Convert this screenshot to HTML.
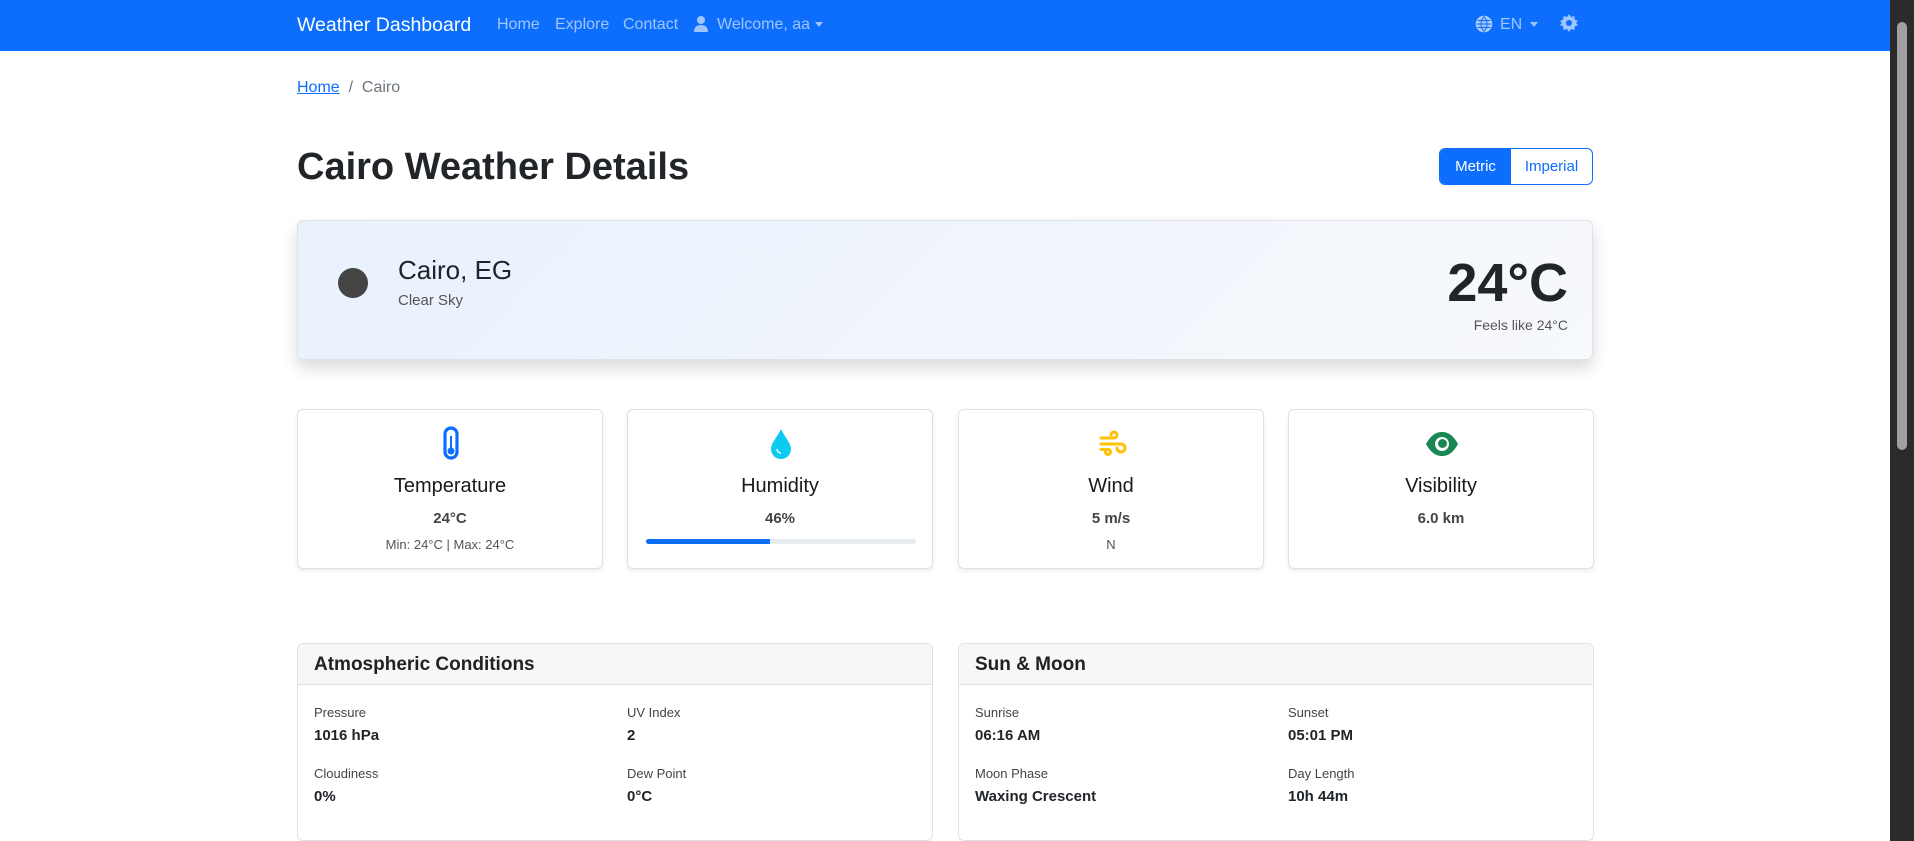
<!DOCTYPE html>
<html><head><meta charset="utf-8"><style>
*{box-sizing:border-box;margin:0;padding:0}
body{width:1914px;height:841px;overflow:hidden;font-family:"Liberation Sans",sans-serif;color:#212529;background:#fff;position:relative}
.nav{position:absolute;left:0;top:0;width:1890px;height:51px;background:#0d6efd}
.nav span{position:absolute;top:1px;line-height:48px;font-size:16px;color:rgba(255,255,255,.6)}
.brand{color:#fff!important;font-size:19.5px!important}
.sb{position:absolute;right:0;top:0;width:24px;height:841px;background:#2b2b2b}
.sb .t{position:absolute;left:7px;top:22px;width:10px;height:428px;background:#a0a0a0;border-radius:5px}
.crumb{position:absolute;left:297px;top:79px;font-size:16px;color:#6c757d}
.crumb a{color:#0d6efd;text-decoration:underline}
h1{position:absolute;left:297px;top:143px;font-size:38px;font-weight:700;line-height:48px}
.bg{position:absolute;left:1439px;top:148px;width:154px;height:37px;border:1px solid #0d6efd;border-radius:6px;overflow:hidden;display:flex;font-size:15px}
.bg div{line-height:35px;text-align:center}
.hero{position:absolute;left:297px;top:220px;width:1296px;height:140px;border:1px solid #dfe3e8;border-radius:6px;background:linear-gradient(135deg,#e9f1fd,#f7f9fc);box-shadow:0 8px 16px rgba(0,0,0,.15)}
.card{position:absolute;top:409px;width:306px;height:160px;border:1px solid #dee2e6;border-radius:6px;box-shadow:0 2px 4px rgba(0,0,0,.08);text-align:center}
.card svg{position:absolute;left:137px;top:16px}
.card .h{position:absolute;left:0;right:0;top:65px;font-size:20px;color:#1a1a1a}
.card .v{position:absolute;left:0;right:0;top:100px;font-size:15px;font-weight:700;color:#444}
.card .s{position:absolute;left:0;right:0;top:127px;font-size:13px;color:#555}
.big{position:absolute;top:643px;width:636px;height:198px;border:1px solid #dee2e6;border-radius:6px;overflow:hidden}
.big .hd{height:41px;background:#f7f7f7;border-bottom:1px solid #dee2e6;font-size:19px;font-weight:700;line-height:42px;padding-left:16px;color:#222}
.lb{position:absolute;font-size:13px;color:#444}
.vl{position:absolute;font-size:15px;font-weight:700}
</style></head><body>
<div class="nav">
<span class="brand" style="left:297px">Weather Dashboard</span>
<span style="left:497px">Home</span><span style="left:555px">Explore</span><span style="left:623px">Contact</span>
<svg style="position:absolute;left:693px;top:15px" width="16" height="17" viewBox="0 0 16 17"><circle cx="8" cy="5" r="4" fill="rgba(255,255,255,.6)"/><path d="M1 17c0-5 3-7 7-7s7 2 7 7z" fill="rgba(255,255,255,.6)"/></svg>
<span style="left:717px">Welcome, aa</span>
<svg style="position:absolute;left:815px;top:22px" width="8" height="5"><path d="M0 0h8L4 5z" fill="rgba(255,255,255,.6)"/></svg>
<svg style="position:absolute;left:1475px;top:15px" width="18" height="18" viewBox="0 0 18 18" fill="none" stroke="rgba(255,255,255,.6)" stroke-width="1.6"><circle cx="9" cy="9" r="7.5" fill="rgba(255,255,255,.6)"/><path d="M1.5 9h15M9 1.5c-4 4-4 11 0 15M9 1.5c4 4 4 11 0 15M2.5 5.5h13M2.5 12.5h13" stroke="#0d6efd" stroke-width="1"/></svg>
<span style="left:1500px">EN</span>
<svg style="position:absolute;left:1530px;top:22px" width="8" height="5"><path d="M0 0h8L4 5z" fill="rgba(255,255,255,.6)"/></svg>
<svg style="position:absolute;left:1560px;top:14px" width="18" height="18" viewBox="0 0 18 18"><path d="M9 0l2 3 3.5-1 .3 3.6L18 7l-2 2 2 2-3.2 1.4-.3 3.6L11 15l-2 3-2-3-3.5 1-.3-3.6L0 11l2-2-2-2 3.2-1.4L3.5 2 7 3z" fill="rgba(255,255,255,.6)"/><circle cx="9" cy="9" r="3" fill="#0d6efd"/></svg>
</div>
<div class="sb"><div class="t"></div></div>
<div class="crumb"><a>Home</a>&nbsp; / &nbsp;Cairo</div>
<h1>Cairo Weather Details</h1>
<div class="bg"><div style="width:71px;background:#0d6efd;color:#fff">Metric</div><div style="flex:1;color:#0d6efd">Imperial</div></div>
<div class="hero">
<div style="position:absolute;left:40px;top:47px;width:30px;height:30px;border-radius:50%;background:#444"></div>
<div style="position:absolute;left:100px;top:34px;font-size:26px">Cairo, EG</div>
<div style="position:absolute;left:100px;top:71px;font-size:15px;color:#555">Clear Sky</div>
<div style="position:absolute;right:24px;top:30px;font-size:54px;font-weight:700;line-height:64px">24°C</div>
<div style="position:absolute;right:24px;top:96px;font-size:14px;color:#555">Feels like 24°C</div>
</div>
<div class="card" style="left:297px">
<svg width="32" height="36" viewBox="0 0 32 36"><rect x="10" y="2" width="12" height="30" rx="6" fill="none" stroke="#0d6efd" stroke-width="3.2"/><circle cx="16" cy="25" r="3.5" fill="#0d6efd"/><rect x="15" y="10" width="2" height="14" fill="#0d6efd"/></svg>
<div class="h">Temperature</div><div class="v">24°C</div><div class="s">Min: 24°C | Max: 24°C</div></div>
<div class="card" style="left:627px">
<svg width="32" height="36" viewBox="0 0 32 36"><path d="M16 3C13 10 6 17 6 23a10 10 0 0 0 20 0c0-6-7-13-10-20z" fill="#0dcaf0"/><path d="M12 23a4 4 0 0 0 4 4" stroke="#fff" stroke-width="1.4" fill="none"/></svg>
<div class="h">Humidity</div><div class="v">46%</div>
<div style="position:absolute;left:18px;top:129px;width:270px;height:5px;background:#e9ecef;border-radius:3px"><div style="width:46%;height:100%;background:#0d6efd;border-radius:3px 0 0 3px"></div></div></div>
<div class="card" style="left:958px">
<svg width="32" height="36" viewBox="0 0 32 36" fill="none" stroke="#ffc107" stroke-width="3" stroke-linecap="round"><path d="M5 12h13a3 3 0 1 0-3-3"/><path d="M5 18h20a4 4 0 1 1-4 4"/><path d="M5 23.5h7a2.5 2.5 0 1 1-2.5 2.5"/></svg>
<div class="h">Wind</div><div class="v">5 m/s</div><div class="s">N</div></div>
<div class="card" style="left:1288px">
<svg width="36" height="36" viewBox="0 0 36 36" style="left:135px"><path d="M2 18C7 9 12 6 18 6s11 3 16 12c-5 9-10 12-16 12S7 27 2 18z" fill="#198754"/><circle cx="18" cy="18" r="7" fill="#fff"/><circle cx="18.5" cy="17.5" r="4.5" fill="#198754"/></svg>
<div class="h">Visibility</div><div class="v">6.0 km</div></div>
<div class="big" style="left:297px"><div class="hd">Atmospheric Conditions</div>
<div class="lb" style="left:16px;top:61px">Pressure</div><div class="vl" style="left:16px;top:83px">1016 hPa</div>
<div class="lb" style="left:329px;top:61px">UV Index</div><div class="vl" style="left:329px;top:83px">2</div>
<div class="lb" style="left:16px;top:122px">Cloudiness</div><div class="vl" style="left:16px;top:144px">0%</div>
<div class="lb" style="left:329px;top:122px">Dew Point</div><div class="vl" style="left:329px;top:144px">0°C</div></div>
<div class="big" style="left:958px"><div class="hd">Sun &amp; Moon</div>
<div class="lb" style="left:16px;top:61px">Sunrise</div><div class="vl" style="left:16px;top:83px">06:16 AM</div>
<div class="lb" style="left:329px;top:61px">Sunset</div><div class="vl" style="left:329px;top:83px">05:01 PM</div>
<div class="lb" style="left:16px;top:122px">Moon Phase</div><div class="vl" style="left:16px;top:144px">Waxing Crescent</div>
<div class="lb" style="left:329px;top:122px">Day Length</div><div class="vl" style="left:329px;top:144px">10h 44m</div></div>
</body></html>
